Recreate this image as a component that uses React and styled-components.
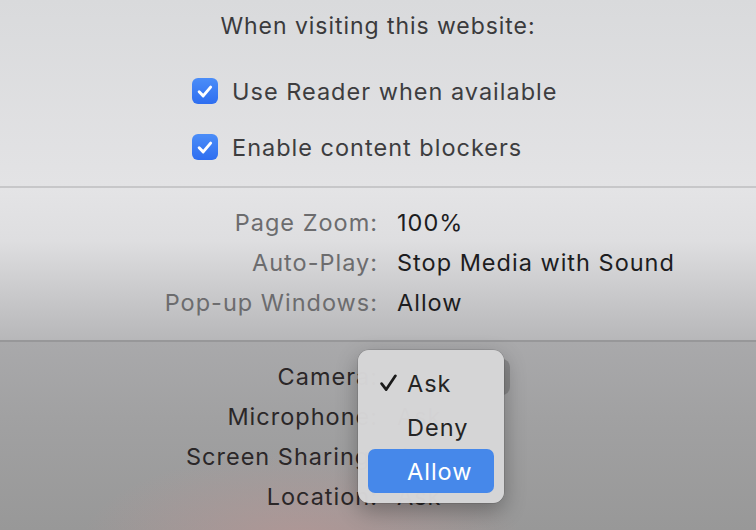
import React from 'react';
import styled, { createGlobalStyle } from 'styled-components';

const GlobalStyle = createGlobalStyle`
  html, body {
    margin: 0;
    padding: 0;
  }
  body {
    font-family: Inter, "Noto Sans", "Liberation Sans", sans-serif;
    -webkit-font-smoothing: antialiased;
  }
`;

const Window = styled.div`
  position: relative;
  width: 756px;
  height: 530px;
  overflow: hidden;
  display: flex;
  flex-direction: column;
`;

const TopSection = styled.section`
  height: 186px;
  box-sizing: border-box;
  padding-top: 10px;
  background: linear-gradient(180deg, #d9dadc 0%, #e3e3e5 100%);
  display: flex;
  flex-direction: column;
`;

const Title = styled.h1`
  margin: 0;
  height: 32px;
  line-height: 32px;
  text-align: center;
  font-size: 23px;
  font-weight: 400;
  color: #3a3a3c;
  letter-spacing: 0.95px;
`;

const CheckList = styled.div`
  display: flex;
  flex-direction: column;
  gap: 30px;
  padding: 36px 0 0 192px;
`;

const CheckRow = styled.label`
  display: flex;
  align-items: center;
  gap: 14px;
  height: 26px;
  font-size: 23.5px;
  color: #3d3d3f;
  letter-spacing: 1px;
`;

const Box = styled.span`
  width: 26px;
  height: 26px;
  border-radius: 6px;
  background: linear-gradient(180deg, #4b8df8 0%, #2e6ef0 100%);
  display: flex;
  align-items: center;
  justify-content: center;
  flex-shrink: 0;
`;

const Divider = styled.div`
  height: 2px;
  background: ${(p) => p.$color};
`;

const MiddleSection = styled.section`
  height: 152px;
  box-sizing: border-box;
  padding-top: 20px;
  background: linear-gradient(180deg, #e4e4e6 0%, #dedee0 35%, #c6c6c8 75%, #b7b7b9 100%);
`;

const BottomSection = styled.section`
  flex: 1;
  box-sizing: border-box;
  padding-top: 20px;
  background:
    radial-gradient(ellipse 220px 90px at 40% 106%, rgba(192, 150, 148, 0.6), rgba(192, 150, 148, 0) 100%),
    linear-gradient(180deg, #a9a9ab 0%, #a1a1a2 40%, #989898 100%);
`;

const Form = styled.div`
  display: grid;
  grid-template-columns: 377px 1fr;
  grid-auto-rows: 30px;
  column-gap: 20px;
  row-gap: 10px;
  font-size: 23.5px;
  letter-spacing: 1px;
  align-items: center;
`;

const Label = styled.span`
  text-align: right;
  line-height: 30px;
  margin-right: -1px;
  color: ${(p) => p.$color};
`;

const Value = styled.span`
  line-height: 30px;
  color: ${(p) => p.$color};
`;

const PopupButton = styled.span`
  display: block;
  margin: -3px 0 -3px -9px;
  width: 122px;
  height: 36px;
  border-radius: 8px;
  background: rgba(60, 60, 60, 0.28);
`;

const Menu = styled.div`
  position: absolute;
  left: 358px;
  top: 350px;
  width: 146px;
  box-sizing: border-box;
  padding: 11px 10px 10px;
  border-radius: 11px;
  background: rgba(214, 214, 215, 0.98);
  box-shadow: 0 0 0 0.5px rgba(0, 0, 0, 0.18), 0 8px 22px rgba(0, 0, 0, 0.3);
  display: flex;
  flex-direction: column;
`;

const MenuItem = styled.div`
  height: 44px;
  border-radius: 7px;
  display: flex;
  align-items: center;
  font-size: 23.5px;
  letter-spacing: 1px;
  color: ${(p) => (p.$active ? '#ffffff' : '#242424')};
  background: ${(p) => (p.$active ? '#4688ea' : 'transparent')};
`;

const Mark = styled.span`
  width: 38px;
  display: flex;
  justify-content: center;
  padding-left: 1px;
`;

const Tick = () => (
  <svg width="18" height="15" viewBox="0 0 16 13">
    <path d="M2.8 6.8 L6.4 10.4 L13 2.6" fill="none" stroke="#fff" strokeWidth="2.6" strokeLinecap="round" strokeLinejoin="round" />
  </svg>
);

const MenuCheck = () => (
  <svg width="17" height="18" viewBox="0 0 17 18">
    <path d="M1.6 9.6 L6.2 15.6 L15.4 1.8" fill="none" stroke="#1a1a1a" strokeWidth="2.7" strokeLinecap="round" strokeLinejoin="round" />
  </svg>
);

const checks = ['Use Reader when available', 'Enable content blockers'];

const general = [
  ['Page Zoom:', '100%'],
  ['Auto-Play:', 'Stop Media with Sound'],
  ['Pop-up Windows:', 'Allow'],
];

const permissions = [
  ['Camera:', null],
  ['Microphone:', 'Ask'],
  ['Screen Sharing:', 'Ask'],
  ['Location:', 'Ask'],
];

const options = ['Ask', 'Deny', 'Allow'];

const App = () => {
  return (
    <Window>
      <GlobalStyle />
      <TopSection>
        <Title>When visiting this website:</Title>
        <CheckList>
          {checks.map((c) => (
            <CheckRow key={c}>
              <Box>
                <Tick />
              </Box>
              {c}
            </CheckRow>
          ))}
        </CheckList>
      </TopSection>
      <Divider $color="#c7c7c9" />
      <MiddleSection>
        <Form>
          {general.map(([l, v]) => (
            <React.Fragment key={l}>
              <Label $color="#6c6c6e">{l}</Label>
              <Value $color="#1d1d1f">{v}</Value>
            </React.Fragment>
          ))}
        </Form>
      </MiddleSection>
      <Divider $color="#979799" />
      <BottomSection>
        <Form>
          {permissions.map(([l, v]) => (
            <React.Fragment key={l}>
              <Label $color="#2b2728">{l}</Label>
              {v ? <Value $color="#2b2728">{v}</Value> : <PopupButton />}
            </React.Fragment>
          ))}
        </Form>
      </BottomSection>
      <Menu>
        {options.map((o) => (
          <MenuItem key={o} $active={o === 'Allow'}>
            <Mark>{o === 'Ask' && <MenuCheck />}</Mark>
            {o}
          </MenuItem>
        ))}
      </Menu>
    </Window>
  );
};

export default App;
